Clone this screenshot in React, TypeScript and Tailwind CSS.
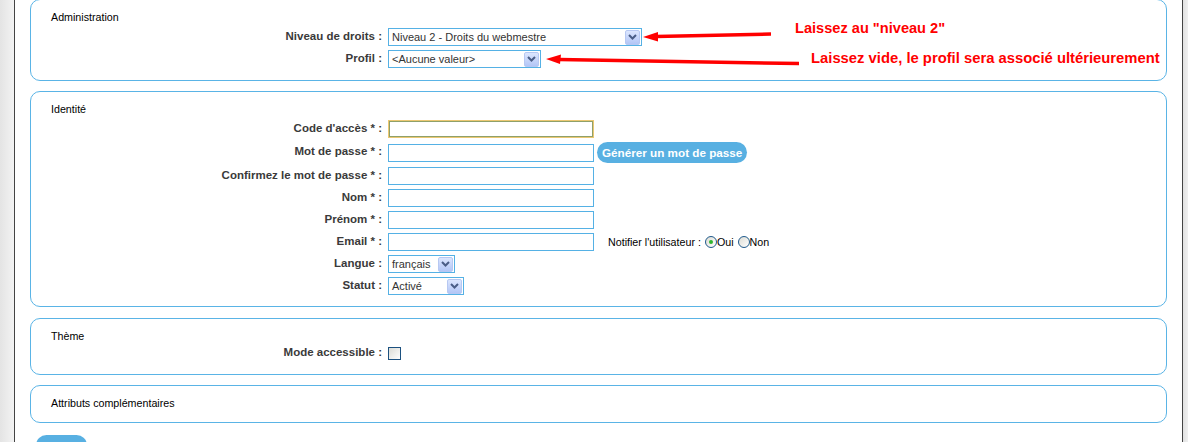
import React from "react";

const F = { fontFamily: '"Liberation Sans", Arial, sans-serif' } as const;

function Chevron() {
  return (
    <span className="flex h-[15px] w-[15px] items-center justify-center rounded-[2px] border border-[#b7c8f2] bg-gradient-to-b from-[#dce6fe] to-[#b3c6f6]">
      <svg width="9" height="6" viewBox="0 0 9 6">
        <path d="M1 1 L4.5 4.5 L8 1" fill="none" stroke="#4a5d86" strokeWidth="2" />
      </svg>
    </span>
  );
}

function Select({ w, text }: { w: string; text: string }) {
  return (
    <div className={`flex h-[18px] items-center justify-between border border-[#55b1e5] bg-white pl-[3px] pr-[1px] ${w}`}>
      <span className="text-[11px] leading-[14px] text-[#333]">{text}</span>
      <Chevron />
    </div>
  );
}

function TextInput({ focus }: { focus?: boolean }) {
  return focus ? (
    <div className="h-[18px] w-[206px] border border-[#ecc872] bg-white shadow-[inset_0_0_0_1px_#8fa06a]" />
  ) : (
    <div className="h-[18px] w-[206px] border border-[#55b1e5] bg-white" />
  );
}

function Row({ label, children, h = "h-[18px]" }: { label: string; children: React.ReactNode; h?: string }) {
  return (
    <div className={`flex items-center gap-[6px] ${h}`}>
      <div className="-mt-[3px] w-[331px] text-right text-[11.5px] font-bold leading-[14px] text-[#3a3a3a]">{label}</div>
      {children}
    </div>
  );
}

function Panel({ title, className, children }: { title: string; className: string; children?: React.ReactNode }) {
  return (
    <div className={`rounded-[10px] border border-[#5ab4e6] pl-[20px] pt-[10px] ${className}`}>
      <div className="text-[10.7px] leading-[14px] text-black">{title}</div>
      {children}
    </div>
  );
}

function Radio({ checked }: { checked?: boolean }) {
  return (
    <span className="relative inline-flex h-[12px] w-[12px] items-center justify-center rounded-full border border-[#1f5a8c] bg-gradient-to-br from-[#dcdcd4] to-white">
      {checked && <span className="h-[4px] w-[4px] rounded-full bg-[#2fb52f]" />}
    </span>
  );
}

export default function App() {
  return (
    <div style={F} className="relative flex h-[442px] w-[1188px] overflow-hidden bg-white">
      <div className="h-full w-[14px] bg-gradient-to-r from-[#e4e4e4] to-[#f3f3f3]" />
      <div className="h-full w-[1px] bg-[#444]" />
      <main className="flex w-[1167px] flex-col px-[15px]">
        <Panel title="Administration" className="-mt-[1px] pb-[12px]">
          <div className="mt-[4px] flex flex-col gap-[4px]">
            <Row label="Niveau de droits :">
              <Select w="w-[254px]" text="Niveau 2 - Droits du webmestre" />
            </Row>
            <Row label="Profil :">
              <Select w="w-[153px]" text="<Aucune valeur>" />
            </Row>
          </div>
        </Panel>

        <Panel title="Identité" className="mt-[10px] pb-[11px]">
          <div className="mt-[4px] flex flex-col gap-[4px]">
            <Row label="Code d'accès * :">
              <TextInput focus />
            </Row>
            <Row label="Mot de passe * :" h="h-[21px]">
              <div className="flex items-center gap-[3px]">
                <TextInput />
                <button className="flex h-[21px] items-center rounded-full bg-[#58b0e2] px-[5px] text-[11.7px] font-bold leading-[14px] text-white">
                  Générer un mot de passe
                </button>
              </div>
            </Row>
            <Row label="Confirmez le mot de passe * :">
              <TextInput />
            </Row>
            <Row label="Nom * :">
              <TextInput />
            </Row>
            <Row label="Prénom * :">
              <TextInput />
            </Row>
            <Row label="Email * :">
              <div className="flex items-center">
                <TextInput />
                <span className="ml-[14px] text-[10.7px] leading-[14px] text-black">Notifier l'utilisateur :</span>
                <span className="ml-[4px] flex items-center">
                  <Radio checked />
                  <span className="text-[10.7px] leading-[14px] text-black">Oui</span>
                  <span className="ml-[4px]" />
                  <Radio />
                  <span className="text-[10.7px] leading-[14px] text-black">Non</span>
                </span>
              </div>
            </Row>
            <Row label="Langue :">
              <Select w="w-[67px]" text="français" />
            </Row>
            <Row label="Statut :">
              <Select w="w-[76px]" text="Activé" />
            </Row>
          </div>
        </Panel>

        <Panel title="Thème" className="mt-[11px] pb-[14px]">
          <div className="mt-[4px]">
            <Row label="Mode accessible :" h="h-[13px]">
              <span className="ml-[0px] h-[13px] w-[13px] border border-[#1c5180] bg-gradient-to-br from-[#dcdcd6] to-white" />
            </Row>
          </div>
        </Panel>

        <Panel title="Attributs complémentaires" className="mt-[10px] pb-[12px]" />

        <div className="mt-[12px] pl-[6px]">
          <button className="flex h-[21px] w-[51px] items-center justify-center rounded-full bg-[#58b0e2] text-[11.7px] font-bold leading-[14px] text-white">
            Valider
          </button>
        </div>
      </main>
      <div className="h-full w-[1px] bg-[#444]" />
      <div className="h-full flex-1 bg-gradient-to-r from-[#e2e2e2] to-[#f0f0f0]" />

      <svg className="pointer-events-none absolute left-0 top-0" width="1188" height="442">
        <line x1="656" y1="36.5" x2="771" y2="34" stroke="#ff0000" strokeWidth="3.5" />
        <polygon points="643,37 658,32 658,41.5" fill="#ff0000" />
        <line x1="559" y1="59.5" x2="799" y2="63.5" stroke="#ff0000" strokeWidth="3.5" />
        <polygon points="546,59 561,54.5 560,64" fill="#ff0000" />
      </svg>
      <div className="pointer-events-none absolute left-[795px] top-[20px] text-[14.6px] font-bold leading-[17px] text-[#ff0000]">
        Laissez au "niveau 2"
      </div>
      <div className="pointer-events-none absolute left-[811px] top-[50px] text-[14.8px] font-bold leading-[17px] text-[#ff0000]">
        Laissez vide, le profil sera associé ultérieurement
      </div>
    </div>
  );
}
